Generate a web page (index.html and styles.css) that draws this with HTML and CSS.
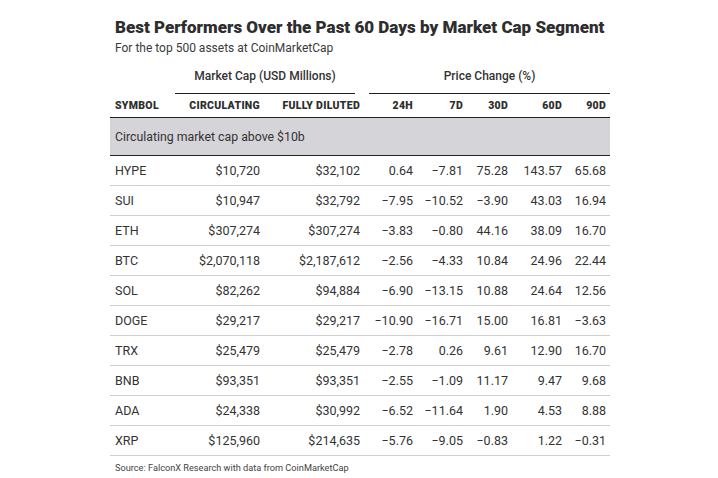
FILE: index.html
```html
<!DOCTYPE html>
<html>
<head>
<meta charset="utf-8">
<link rel="stylesheet" href="styles.css">
</head>
<body>
<div class="chart">
  <h1 class="title">Best Performers Over the Past 60 Days by Market Cap Segment</h1>
  <p class="subtitle">For the top 500 assets at CoinMarketCap</p>
  <table class="tbl">
    <colgroup>
      <col class="c-sym"><col class="c-circ"><col class="c-fd"><col class="c-24"><col class="c-7"><col class="c-30"><col class="c-60"><col class="c-90">
    </colgroup>
    <thead>
      <tr class="group">
        <th></th>
        <th colspan="2" class="g-mc"><span>Market Cap (USD Millions)</span></th>
        <th colspan="5" class="g-pc"><span>Price Change (%)</span></th>
      </tr>
      <tr class="heads">
        <th class="left">SYMBOL</th>
        <th>CIRCULATING</th>
        <th>FULLY DILUTED</th>
        <th>24H</th>
        <th>7D</th>
        <th>30D</th>
        <th>60D</th>
        <th>90D</th>
      </tr>
    </thead>
    <tbody>
      <tr class="band"><td colspan="8">Circulating market cap above $10b</td></tr>
      <tr><td class="left">HYPE</td><td>$10,720</td><td>$32,102</td><td>0.64</td><td>−7.81</td><td>75.28</td><td>143.57</td><td>65.68</td></tr>
      <tr><td class="left">SUI</td><td>$10,947</td><td>$32,792</td><td>−7.95</td><td>−10.52</td><td>−3.90</td><td>43.03</td><td>16.94</td></tr>
      <tr><td class="left">ETH</td><td>$307,274</td><td>$307,274</td><td>−3.83</td><td>−0.80</td><td>44.16</td><td>38.09</td><td>16.70</td></tr>
      <tr><td class="left">BTC</td><td>$2,070,118</td><td>$2,187,612</td><td>−2.56</td><td>−4.33</td><td>10.84</td><td>24.96</td><td>22.44</td></tr>
      <tr><td class="left">SOL</td><td>$82,262</td><td>$94,884</td><td>−6.90</td><td>−13.15</td><td>10.88</td><td>24.64</td><td>12.56</td></tr>
      <tr><td class="left">DOGE</td><td>$29,217</td><td>$29,217</td><td>−10.90</td><td>−16.71</td><td>15.00</td><td>16.81</td><td>−3.63</td></tr>
      <tr><td class="left">TRX</td><td>$25,479</td><td>$25,479</td><td>−2.78</td><td>0.26</td><td>9.61</td><td>12.90</td><td>16.70</td></tr>
      <tr><td class="left">BNB</td><td>$93,351</td><td>$93,351</td><td>−2.55</td><td>−1.09</td><td>11.17</td><td>9.47</td><td>9.68</td></tr>
      <tr><td class="left">ADA</td><td>$24,338</td><td>$30,992</td><td>−6.52</td><td>−11.64</td><td>1.90</td><td>4.53</td><td>8.88</td></tr>
      <tr><td class="left">XRP</td><td>$125,960</td><td>$214,635</td><td>−5.76</td><td>−9.05</td><td>−0.83</td><td>1.22</td><td>−0.31</td></tr>
    </tbody>
  </table>
  <p class="source">Source: FalconX Research with data from CoinMarketCap</p>
</div>
</body>
</html>
```

FILE: styles.css
```css
html, body {
  margin: 0;
  padding: 0;
  background: #ffffff;
}
body {
  font-family: Roboto, "Liberation Sans", sans-serif;
  color: #333333;
}
.chart {
  width: 500px;
  margin-left: 110px;
  padding-top: 15px;
}
.title {
  margin: 0 0 0 5px;
  font-size: 17px;
  font-weight: 900;
  line-height: 24px;
  color: #2e2e2e;
  white-space: nowrap;
}
.subtitle {
  margin: 2px 0 0 5px;
  font-size: 12px;
  line-height: 15px;
  color: #3a3a3a;
}
.tbl {
  width: 500px;
  border-collapse: collapse;
  table-layout: fixed;
  margin-top: 12px;
}
.c-sym { width: 65px; }
.c-circ { width: 89px; }
.c-fd { width: 100px; }
.c-24 { width: 53px; }
.c-7 { width: 50px; }
.c-30 { width: 45px; }
.c-60 { width: 54px; }
.c-90 { width: 44px; }

.group th {
  font-size: 12px;
  font-weight: 500;
  padding: 0;
  height: 26px;
  vertical-align: top;
  text-align: center;
}
.group th span {
  display: block;
  line-height: 16px;
  padding-bottom: 9px;
  border-bottom: 1.5px solid #222;
}
.g-mc { padding-right: 9px !important; }
.g-pc { padding-left: 5px !important; }

.heads th {
  font-size: 10.5px;
  font-weight: 900;
  letter-spacing: 0.3px;
  text-align: right;
  padding: 0 4px 0 0;
  height: 23px;
  border-bottom: 1.5px solid #222;
  color: #2e2e2e;
}
.heads th.left,
td.left {
  text-align: left;
  padding-left: 5px;
}
td {
  font-size: 12.5px;
  text-align: right;
  padding: 0 4px 0 0;
  height: 29px;
  border-bottom: 1px solid #cfcfcf;
  white-space: nowrap;
  color: #333;
}
.band td {
  background: #d5d4d9;
  text-align: left;
  padding-left: 5px;
  height: 37px;
  border-bottom: 1.5px solid #222;
  font-size: 12.3px;
}
.source {
  margin: 6px 0 0 5px;
  font-size: 9.2px;
  line-height: 12px;
  color: #444;
}
```
